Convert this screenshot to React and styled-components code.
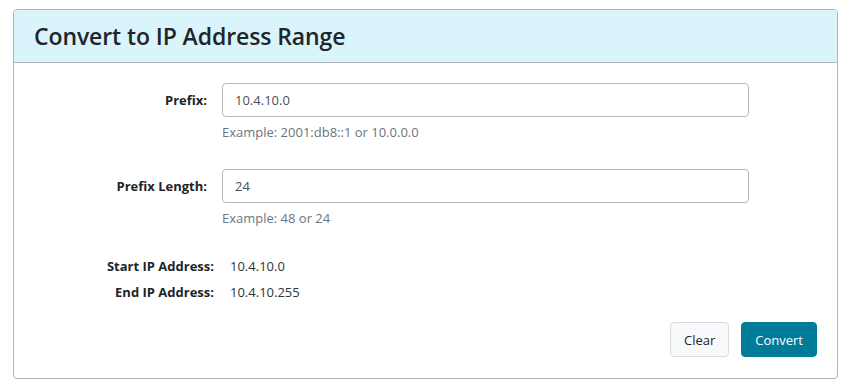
import React from "react";
import styled, { createGlobalStyle } from "styled-components";

const Global = createGlobalStyle`
  html, body { margin: 0; padding: 0; background: #ffffff; }
  body {
    font-family: "Open Sans", "Noto Sans", "Liberation Sans", sans-serif;
    color: #212529;
  }
  * { box-sizing: border-box; }
`;

const Page = styled.div`
  padding: 9px 15px 13px 13px;
`;

const Card = styled.section`
  width: 825px;
  border: 1px solid #aeb5bc;
  border-radius: 4px;
  background: #fff;
  overflow: hidden;
`;

const CardHeader = styled.header`
  background: #daf4fb;
  border-bottom: 1px solid #aeb5bc;
  height: 53px;
  display: flex;
  align-items: center;
  padding: 0 20px;
`;

const Title = styled.h1`
  margin: 0;
  font-size: 23px;
  font-weight: 600;
  color: #212529;
  letter-spacing: -0.1px;
`;

const CardBody = styled.div`
  padding: 20px 20px 21px 20px;
`;

const FieldRow = styled.div`
  display: grid;
  grid-template-columns: 173px 527px;
  column-gap: 15px;
  margin-bottom: ${(p) => p.$mb || 0}px;
`;

const Label = styled.label`
  font-size: 13px;
  font-weight: 700;
  color: #212529;
  text-align: right;
  height: 34px;
  line-height: 34px;
`;

const InputWrap = styled.div`
  display: flex;
  flex-direction: column;
`;

const Input = styled.input`
  height: 34px;
  border: 1px solid #b3b9bf;
  border-radius: 4px;
  padding: 0 12px;
  font-family: inherit;
  font-size: 13px;
  color: #495057;
  outline: none;
`;

const Help = styled.small`
  margin-top: 5px;
  font-size: 13px;
  color: #6c757d;
  line-height: 20px;
`;

const Results = styled.dl`
  margin: 28px 0 0 0;
  display: grid;
  grid-template-columns: 180px auto;
  column-gap: 16px;
  row-gap: 6px;
  font-size: 13px;
  line-height: 20px;
`;

const Term = styled.dt`
  font-weight: 700;
  text-align: right;
  color: #212529;
`;

const Value = styled.dd`
  margin: 0;
  color: #333;
`;

const Actions = styled.div`
  display: flex;
  justify-content: flex-end;
  gap: 12px;
  margin-top: 20px;
`;

const Button = styled.button`
  height: 35px;
  padding: 0 13px;
  border-radius: 4px;
  font-family: inherit;
  font-size: 13px;
  cursor: pointer;
  border: 1px solid ${(p) => (p.$primary ? "#007c99" : "#d8dce0")};
  background: ${(p) => (p.$primary ? "#007c99" : "#f8f9fa")};
  color: ${(p) => (p.$primary ? "#ffffff" : "#212529")};
`;

export default function App() {
  return (
    <Page>
      <Global />
      <Card>
        <CardHeader>
          <Title>Convert to IP Address Range</Title>
        </CardHeader>
        <CardBody>
          <FieldRow $mb={27}>
            <Label>Prefix:</Label>
            <InputWrap>
              <Input defaultValue="10.4.10.0" />
              <Help>Example: 2001:db8::1 or 10.0.0.0</Help>
            </InputWrap>
          </FieldRow>
          <FieldRow>
            <Label>Prefix Length:</Label>
            <InputWrap>
              <Input defaultValue="24" />
              <Help>Example: 48 or 24</Help>
            </InputWrap>
          </FieldRow>
          <Results>
            <Term>Start IP Address:</Term>
            <Value>10.4.10.0</Value>
            <Term>End IP Address:</Term>
            <Value>10.4.10.255</Value>
          </Results>
          <Actions>
            <Button type="button">Clear</Button>
            <Button type="button" $primary>Convert</Button>
          </Actions>
        </CardBody>
      </Card>
    </Page>
  );
}
